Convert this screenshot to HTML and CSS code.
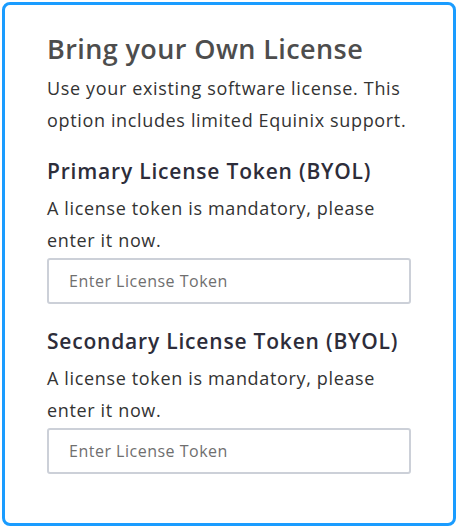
FILE: index.html
```html
<!DOCTYPE html>
<html lang="en">
<head>
  <meta charset="UTF-8">
  <meta name="viewport" content="width=device-width, initial-scale=1.0">
  <title>Bring your Own License</title>
  <link rel="stylesheet" href="styles.css">
</head>
<body>

  <div class="license-card">
    <h1 class="card-title">Bring your Own License</h1>
    <p class="card-text">Use your existing software license. This option includes limited Equinix support.</p>

    <div class="token-group">
      <h2 class="token-title">Primary License Token (BYOL)</h2>
      <p class="card-text">A license token is mandatory, please enter it now.</p>
      <input type="text" class="token-input" placeholder="Enter License Token">
    </div>

    <div class="token-group">
      <h2 class="token-title">Secondary License Token (BYOL)</h2>
      <p class="card-text">A license token is mandatory, please enter it now.</p>
      <input type="text" class="token-input" placeholder="Enter License Token">
    </div>
  </div>

</body>
</html>
```

FILE: styles.css
```css
body, html {
  margin: 0;
  padding: 0;
  background-color: #ffffff;
  font-family: 'Open Sans', 'Liberation Sans', sans-serif;
  color: #333;
}

body {
  padding: 2px;
}

.license-card {
  box-sizing: border-box;
  width: 454px;
  height: 524px;
  padding: 28px 40px 0 42px;
  border: 3px solid #1a9cff;
  border-radius: 8px;
  background: #ffffff;
}

.card-title {
  margin: 0;
  font-size: 27px;
  line-height: 32px;
  font-weight: 600;
  letter-spacing: 0.4px;
  color: #4d4d4d;
}

.card-text {
  margin: 8px 0 0;
  font-size: 18px;
  line-height: 31.5px;
  letter-spacing: 0.65px;
  color: #333;
}

.token-group {
  margin-top: 21px;
}

.token-group + .token-group {
  margin-top: 23px;
}

.token-title {
  margin: 0;
  font-size: 21px;
  line-height: 28px;
  font-weight: 600;
  letter-spacing: 0.8px;
  color: #2d2d3a;
}

.token-input {
  box-sizing: border-box;
  display: block;
  width: 364px;
  height: 46px;
  margin-top: 2px;
  padding: 0 20px;
  font-family: inherit;
  font-size: 16px;
  letter-spacing: 0.5px;
  color: #333;
  border: 2px solid #ccd0d8;
  border-radius: 3px;
  outline: none;
}

.token-input::placeholder {
  color: #6f6f6f;
}
```
